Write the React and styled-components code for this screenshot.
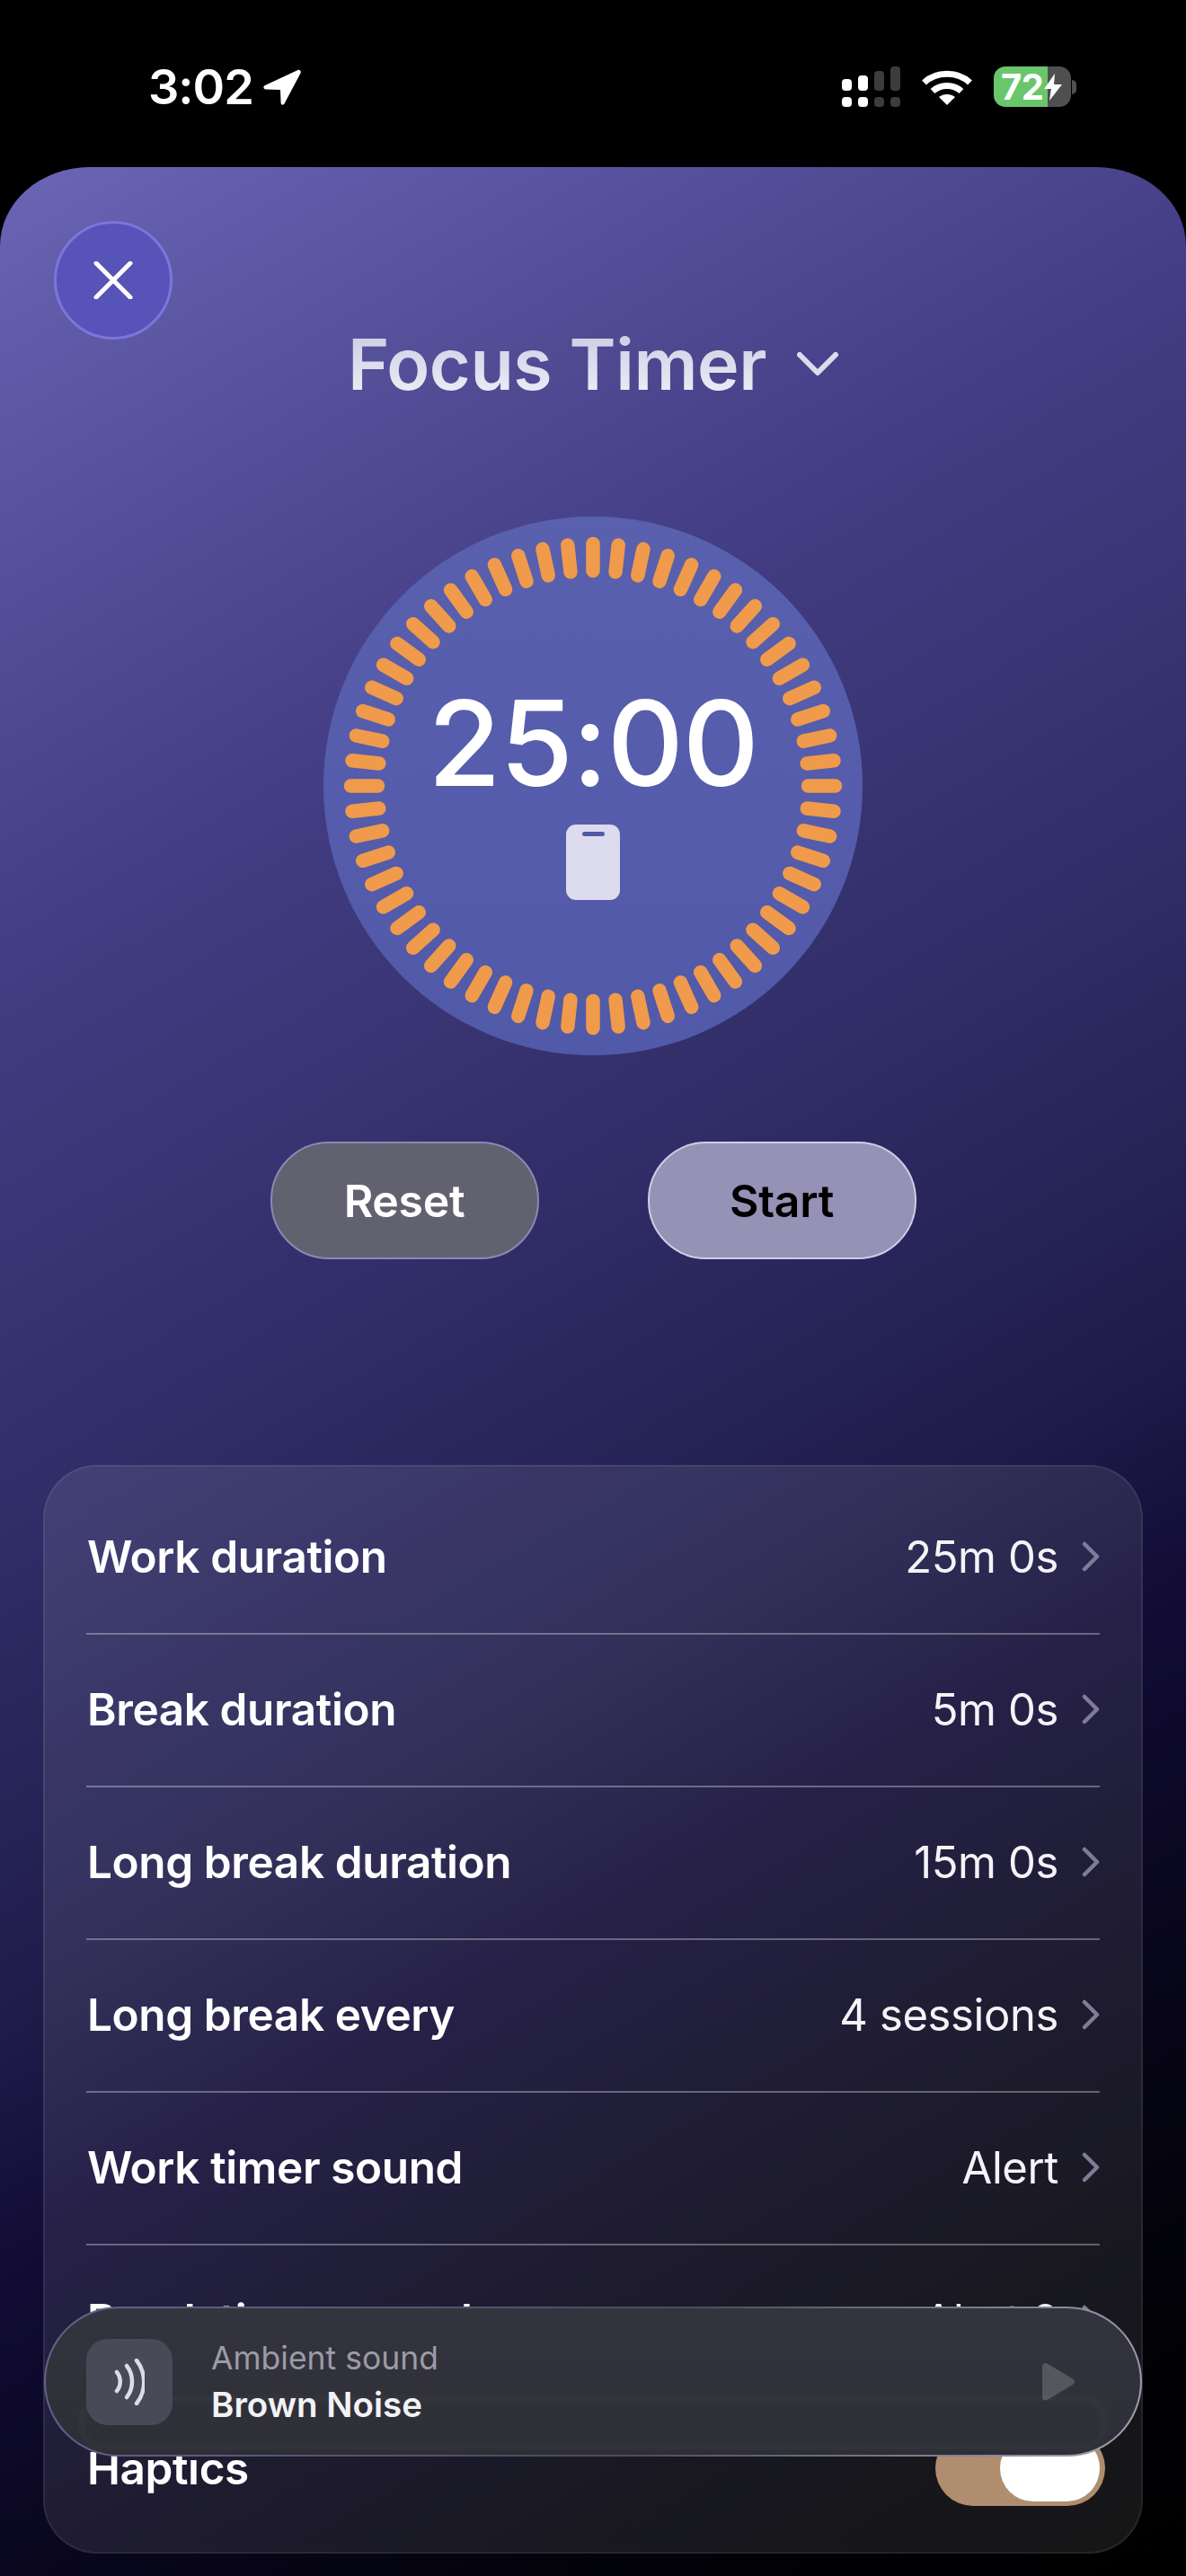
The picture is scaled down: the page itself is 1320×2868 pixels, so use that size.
import React from 'react'
import styled, { createGlobalStyle } from 'styled-components'

const GlobalStyle = createGlobalStyle`
  html, body {
    margin: 0;
    padding: 0;
    background: #000;
  }
  body {
    font-family: Inter, "Noto Sans", "Liberation Sans", sans-serif;
    -webkit-font-smoothing: antialiased;
  }
`

const Screen = styled.div`
  width: 1320px;
  height: 2868px;
  overflow: hidden;
  background: #000;
  display: flex;
  flex-direction: column;
`

const StatusBar = styled.div`
  height: 186px;
  flex-shrink: 0;
  box-sizing: border-box;
  padding: 74px 122px 0 165px;
  display: flex;
  justify-content: space-between;
  align-items: flex-start;
`

const StatusLeft = styled.div`
  display: flex;
  align-items: center;
  gap: 11px;
  height: 45px;
`

const Clock = styled.span`
  color: #fff;
  font-size: 54px;
  font-weight: 600;
  letter-spacing: -1px;
  line-height: 45px;
`

const StatusRight = styled.div`
  display: flex;
  align-items: flex-start;
  gap: 23px;
`

const Battery = styled.div`
  width: 86px;
  height: 45px;
  border-radius: 13px;
  background: linear-gradient(90deg, #69c66b 0 60px, #4f4f4f 60px);
  display: flex;
  align-items: center;
  padding-left: 8px;
  box-sizing: border-box;
`

const BatteryLevel = styled.span`
  color: #fff;
  font-size: 40px;
  font-weight: 700;
  line-height: 45px;
  letter-spacing: -0.5px;
`

const BatteryWrap = styled.div`
  display: flex;
  align-items: center;
  height: 45px;
  gap: 1px;
`

const BatteryNub = styled.div`
  width: 5px;
  height: 16px;
  border-radius: 0 6px 6px 0;
  background: #4f4f4f;
`

const Sheet = styled.div`
  position: relative;
  flex: 1;
  border-radius: 100px 100px 0 0 / 88px 88px 0 0;
  padding-top: 60px;
  display: flex;
  flex-direction: column;
  background: linear-gradient(
    150deg,
    #6a65b5 0%,
    #4f4a92 17%,
    #433e86 25%,
    #3a3574 35%,
    #2d2a63 47%,
    #1f1c4a 60%,
    #120c36 68%,
    #08061a 80%,
    #020208 90%,
    #000 100%
  );
`

const CloseButton = styled.button`
  width: 132px;
  height: 132px;
  margin-left: 60px;
  padding: 0;
  flex-shrink: 0;
  border-radius: 50%;
  border: 3px solid #7a76da;
  background: #5853b8;
  display: flex;
  align-items: center;
  justify-content: center;
`

const TitleRow = styled.div`
  height: 70px;
  margin-top: -8px;
  display: flex;
  align-items: center;
  justify-content: center;
  gap: 34px;
`

const Title = styled.h1`
  margin: 0;
  font-size: 79px;
  line-height: 70px;
  font-weight: 600;
  letter-spacing: -0.5px;
  color: transparent;
  background: linear-gradient(180deg, #cdcde4, #ecedf6);
  background-clip: text;
  -webkit-background-clip: text;
`

const Dial = styled.div`
  position: relative;
  width: 600px;
  height: 600px;
  margin: 135px auto 0;
  flex-shrink: 0;
  border-radius: 50%;
  background: linear-gradient(180deg, #5960ae, #5159a9);
  display: flex;
  flex-direction: column;
  align-items: center;
  padding-top: 186px;
  box-sizing: border-box;
`

const DialTicks = styled.svg`
  position: absolute;
  inset: 0;
`

const Time = styled.div`
  color: #fff;
  font-size: 132px;
  line-height: 132px;
  font-weight: 500;
  letter-spacing: -1.200px;
`

const PhoneBadge = styled.div`
  width: 60px;
  height: 84px;
  margin-top: 25px;
  border-radius: 11px;
  background: #dcdcee;
  display: flex;
  justify-content: center;
  padding-top: 8px;
  box-sizing: border-box;
`

const PhoneNotch = styled.div`
  width: 25px;
  height: 5px;
  border-radius: 3px;
  background: #5159a9;
`

const Actions = styled.div`
  display: flex;
  justify-content: center;
  gap: 121px;
  margin-top: 96px;
`

const ActionButton = styled.button`
  width: 299px;
  height: 131px;
  border-radius: 65px;
  padding: 0;
  box-sizing: border-box;
  font-family: inherit;
  font-size: 50px;
  font-weight: 600;
  letter-spacing: -0.3px;
  border: 2px solid ${p => (p.$primary ? '#cfcde6' : '#8b89b4')};
  background: ${p => (p.$primary ? '#9592b6' : '#62616f')};
  color: ${p => (p.$primary ? '#000' : '#fff')};
`

const Panel = styled.div`
  margin: 229px 48px 0 48px;
  padding: 17px 46px 0;
  height: 1212px;
  box-sizing: border-box;
  border-radius: 60px;
  border: 2px solid rgba(255, 255, 255, 0.07);
  background: rgba(255, 255, 255, 0.085);
`

const Row = styled.div`
  height: ${p => (p.$last ? 156 : 170)}px;
  box-sizing: border-box;
  display: flex;
  align-items: center;
  justify-content: space-between;
  border-bottom: ${p => (p.$last ? 'none' : '2px solid rgba(255, 255, 255, 0.32)')};
  padding-bottom: ${p => (p.$last ? 0 : 2)}px;
`

const RowLabel = styled.span`
  color: #fff;
  font-size: 49.500px;
  font-weight: 600;
  letter-spacing: -0.4px;
  padding-left: 1px;
`

const RowValue = styled.span`
  display: flex;
  align-items: center;
  gap: 26px;
  color: #f4f4f8;
  font-size: 49px;
  font-weight: 400;
  letter-spacing: -0.4px;
`

const Toggle = styled.div`
  width: 189px;
  height: 84px;
  margin-right: -6px;
  border-radius: 42px;
  background: #b08d6f;
  display: flex;
  align-items: center;
  justify-content: flex-end;
  padding-right: 6px;
  box-sizing: border-box;
`

const ToggleKnob = styled.div`
  width: 111px;
  height: 74px;
  border-radius: 37px;
  background: #fff;
`

const AmbientBar = styled.div`
  position: absolute;
  left: 49px;
  right: 49px;
  top: 2382px;
  height: 167px;
  box-sizing: border-box;
  border-radius: 84px;
  border: 2px solid transparent;
  background:
    linear-gradient(180deg, #34343e, #2e2e37) padding-box,
    linear-gradient(115deg, #64638a, #4b4b5c 55%, #a2a2b6) border-box;
  display: flex;
  align-items: center;
  padding: 0 72px 0 45px;
`

const AmbientGlow = styled.div`
  position: absolute;
  left: 38px;
  right: 38px;
  top: 98px;
  height: 50px;
  border-radius: 25px;
  border: 4px solid rgba(255, 255, 255, 0.045);
  filter: blur(3px);
`

const SoundTile = styled.div`
  position: relative;
  width: 96px;
  height: 96px;
  border-radius: 24px;
  background: #4a4958;
  display: flex;
  align-items: center;
  justify-content: center;
  flex-shrink: 0;
`

const AmbientText = styled.div`
  position: relative;
  margin-left: 43px;
  flex: 1;
  display: flex;
  flex-direction: column;
  gap: 7px;
`

const AmbientCaption = styled.span`
  color: #9c9ba6;
  font-size: 35.500px;
  line-height: 44px;
  font-weight: 400;
`

const AmbientName = styled.span`
  color: #f2f2f6;
  font-size: 38.500px;
  line-height: 44px;
  font-weight: 600;
`

const settings = [
  ['Work duration', '25m 0s'],
  ['Break duration', '5m 0s'],
  ['Long break duration', '15m 0s'],
  ['Long break every', '4 sessions'],
  ['Work timer sound', 'Alert'],
  ['Break timer sound', 'Alert 2']
]

const LocationArrow = () => (
  <svg width='42' height='40' viewBox='0 0 42 40'>
    <path
      d='M38.500 1 2 18c-2.500 1.200-2 4.500.8 4.500L19 23l.6 14.500c.1 2.500 3 3 4 .8L41.500 4.500c.9-2.300-.8-4.300-3-3.500z'
      fill='#fff'
    />
  </svg>
)

const SignalIcon = () => (
  <svg width='65' height='45' viewBox='0 0 65 45'>
    <rect x='0' y='14' width='11' height='13' rx='4' fill='#fff' />
    <rect x='18' y='10' width='11' height='17' rx='4' fill='#fff' />
    <rect x='36' y='5' width='11' height='22' rx='4' fill='#3c3c3c' />
    <rect x='54' y='0' width='11' height='27' rx='4' fill='#3c3c3c' />
    <rect x='0' y='34' width='11' height='11' rx='4' fill='#fff' />
    <rect x='18' y='34' width='11' height='11' rx='4' fill='#fff' />
    <rect x='36' y='34' width='11' height='11' rx='4' fill='#3c3c3c' />
    <rect x='54' y='34' width='11' height='11' rx='4' fill='#3c3c3c' />
  </svg>
)

const WifiIcon = () => (
  <svg width='58' height='45' viewBox='0 0 58 45' fill='none'>
    <path d='M3.500 18C17 5 41 5 54.500 18' stroke='#fff' strokeWidth='7' />
    <path d='M13 27.500c9-8 23-8 32 0' stroke='#fff' strokeWidth='7' />
    <path d='M20 34c5-4 13-4 18 0L29 43z' fill='#fff' />
  </svg>
)

const BoltIcon = () => (
  <svg width='22' height='30' viewBox='0 0 22 30' style={{ flexShrink: 0 }}>
    <path d='M13 0 1 17h8l-2 13L21 12h-9z' fill='#fff' />
  </svg>
)

const CloseIcon = () => (
  <svg width='44' height='42' viewBox='0 0 44 42'>
    <path d='M3 2 41 40M41 2 3 40' stroke='#fff' strokeWidth='5' strokeLinecap='round' />
  </svg>
)

const TitleChevron = () => (
  <svg width='46' height='26' viewBox='0 0 46 26' fill='none'>
    <path
      d='M3 3 23 23 43 3'
      stroke='#dcdcee'
      strokeWidth='6'
      strokeLinecap='round'
      strokeLinejoin='round'
    />
  </svg>
)

const RowChevron = () => (
  <svg width='20' height='34' viewBox='0 0 20 34' fill='none'>
    <path
      d='M3 3 17 17 3 31'
      stroke='#7e7c96'
      strokeWidth='4.500'
      strokeLinecap='round'
      strokeLinejoin='round'
    />
  </svg>
)

const SoundWaves = () => (
  <svg width='34' height='52' viewBox='0 0 34 52' fill='none'>
    <g stroke='#dcdce6' strokeWidth='4.500' strokeLinecap='round'>
      <path d='M3 15c5 6 5 15 0 21' />
      <path d='M14 8c8 10 8 25 0 35' />
      <path d='M25 2c11 14 11 34 0 48' />
    </g>
  </svg>
)

const PlayIcon = () => (
  <svg width='38' height='44' viewBox='0 0 38 44'>
    <path d='M1 5c0-3.500 3-5 5.500-3.500L35 18.500c2.500 1.500 2.500 5 0 6.500L6.500 42C4 43.500 1 42 1 39z' fill='#55565e' />
  </svg>
)

// 60 rounded ticks round the dial
const Ticks = () => (
  <DialTicks width='600' height='600' viewBox='0 0 600 600'>
    {Array.from({ length: 60 }, (_, i) => (
      <line
        key={i}
        x1='300'
        y1='30.500'
        x2='300'
        y2='60.500'
        stroke='#f09a4b'
        strokeWidth='15.500'
        strokeLinecap='round'
        transform={`rotate(${i * 6} 300 300)`}
      />
    ))}
  </DialTicks>
)

export default function App () {
  return (
    <Screen>
      <GlobalStyle />
      <StatusBar>
        <StatusLeft>
          <Clock>3:02</Clock>
          <LocationArrow />
        </StatusLeft>
        <StatusRight>
          <SignalIcon />
          <WifiIcon />
          <BatteryWrap>
            <Battery>
              <BatteryLevel>72</BatteryLevel>
              <BoltIcon />
            </Battery>
            <BatteryNub />
          </BatteryWrap>
        </StatusRight>
      </StatusBar>

      <Sheet>
        <CloseButton aria-label='Close'>
          <CloseIcon />
        </CloseButton>
        <TitleRow>
          <Title>Focus Timer</Title>
          <TitleChevron />
        </TitleRow>

        <Dial>
          <Ticks />
          <Time>25:00</Time>
          <PhoneBadge>
            <PhoneNotch />
          </PhoneBadge>
        </Dial>

        <Actions>
          <ActionButton>Reset</ActionButton>
          <ActionButton $primary>Start</ActionButton>
        </Actions>

        <Panel>
          {settings.map(([label, value]) => (
            <Row key={label}>
              <RowLabel>{label}</RowLabel>
              <RowValue>
                {value}
                <RowChevron />
              </RowValue>
            </Row>
          ))}
          <Row $last>
            <RowLabel>Haptics</RowLabel>
            <Toggle>
              <ToggleKnob />
            </Toggle>
          </Row>
        </Panel>

        <AmbientBar>
          <AmbientGlow />
          <SoundTile>
            <SoundWaves />
          </SoundTile>
          <AmbientText>
            <AmbientCaption>Ambient sound</AmbientCaption>
            <AmbientName>Brown Noise</AmbientName>
          </AmbientText>
          <PlayIcon />
        </AmbientBar>
      </Sheet>
    </Screen>
  )
}
